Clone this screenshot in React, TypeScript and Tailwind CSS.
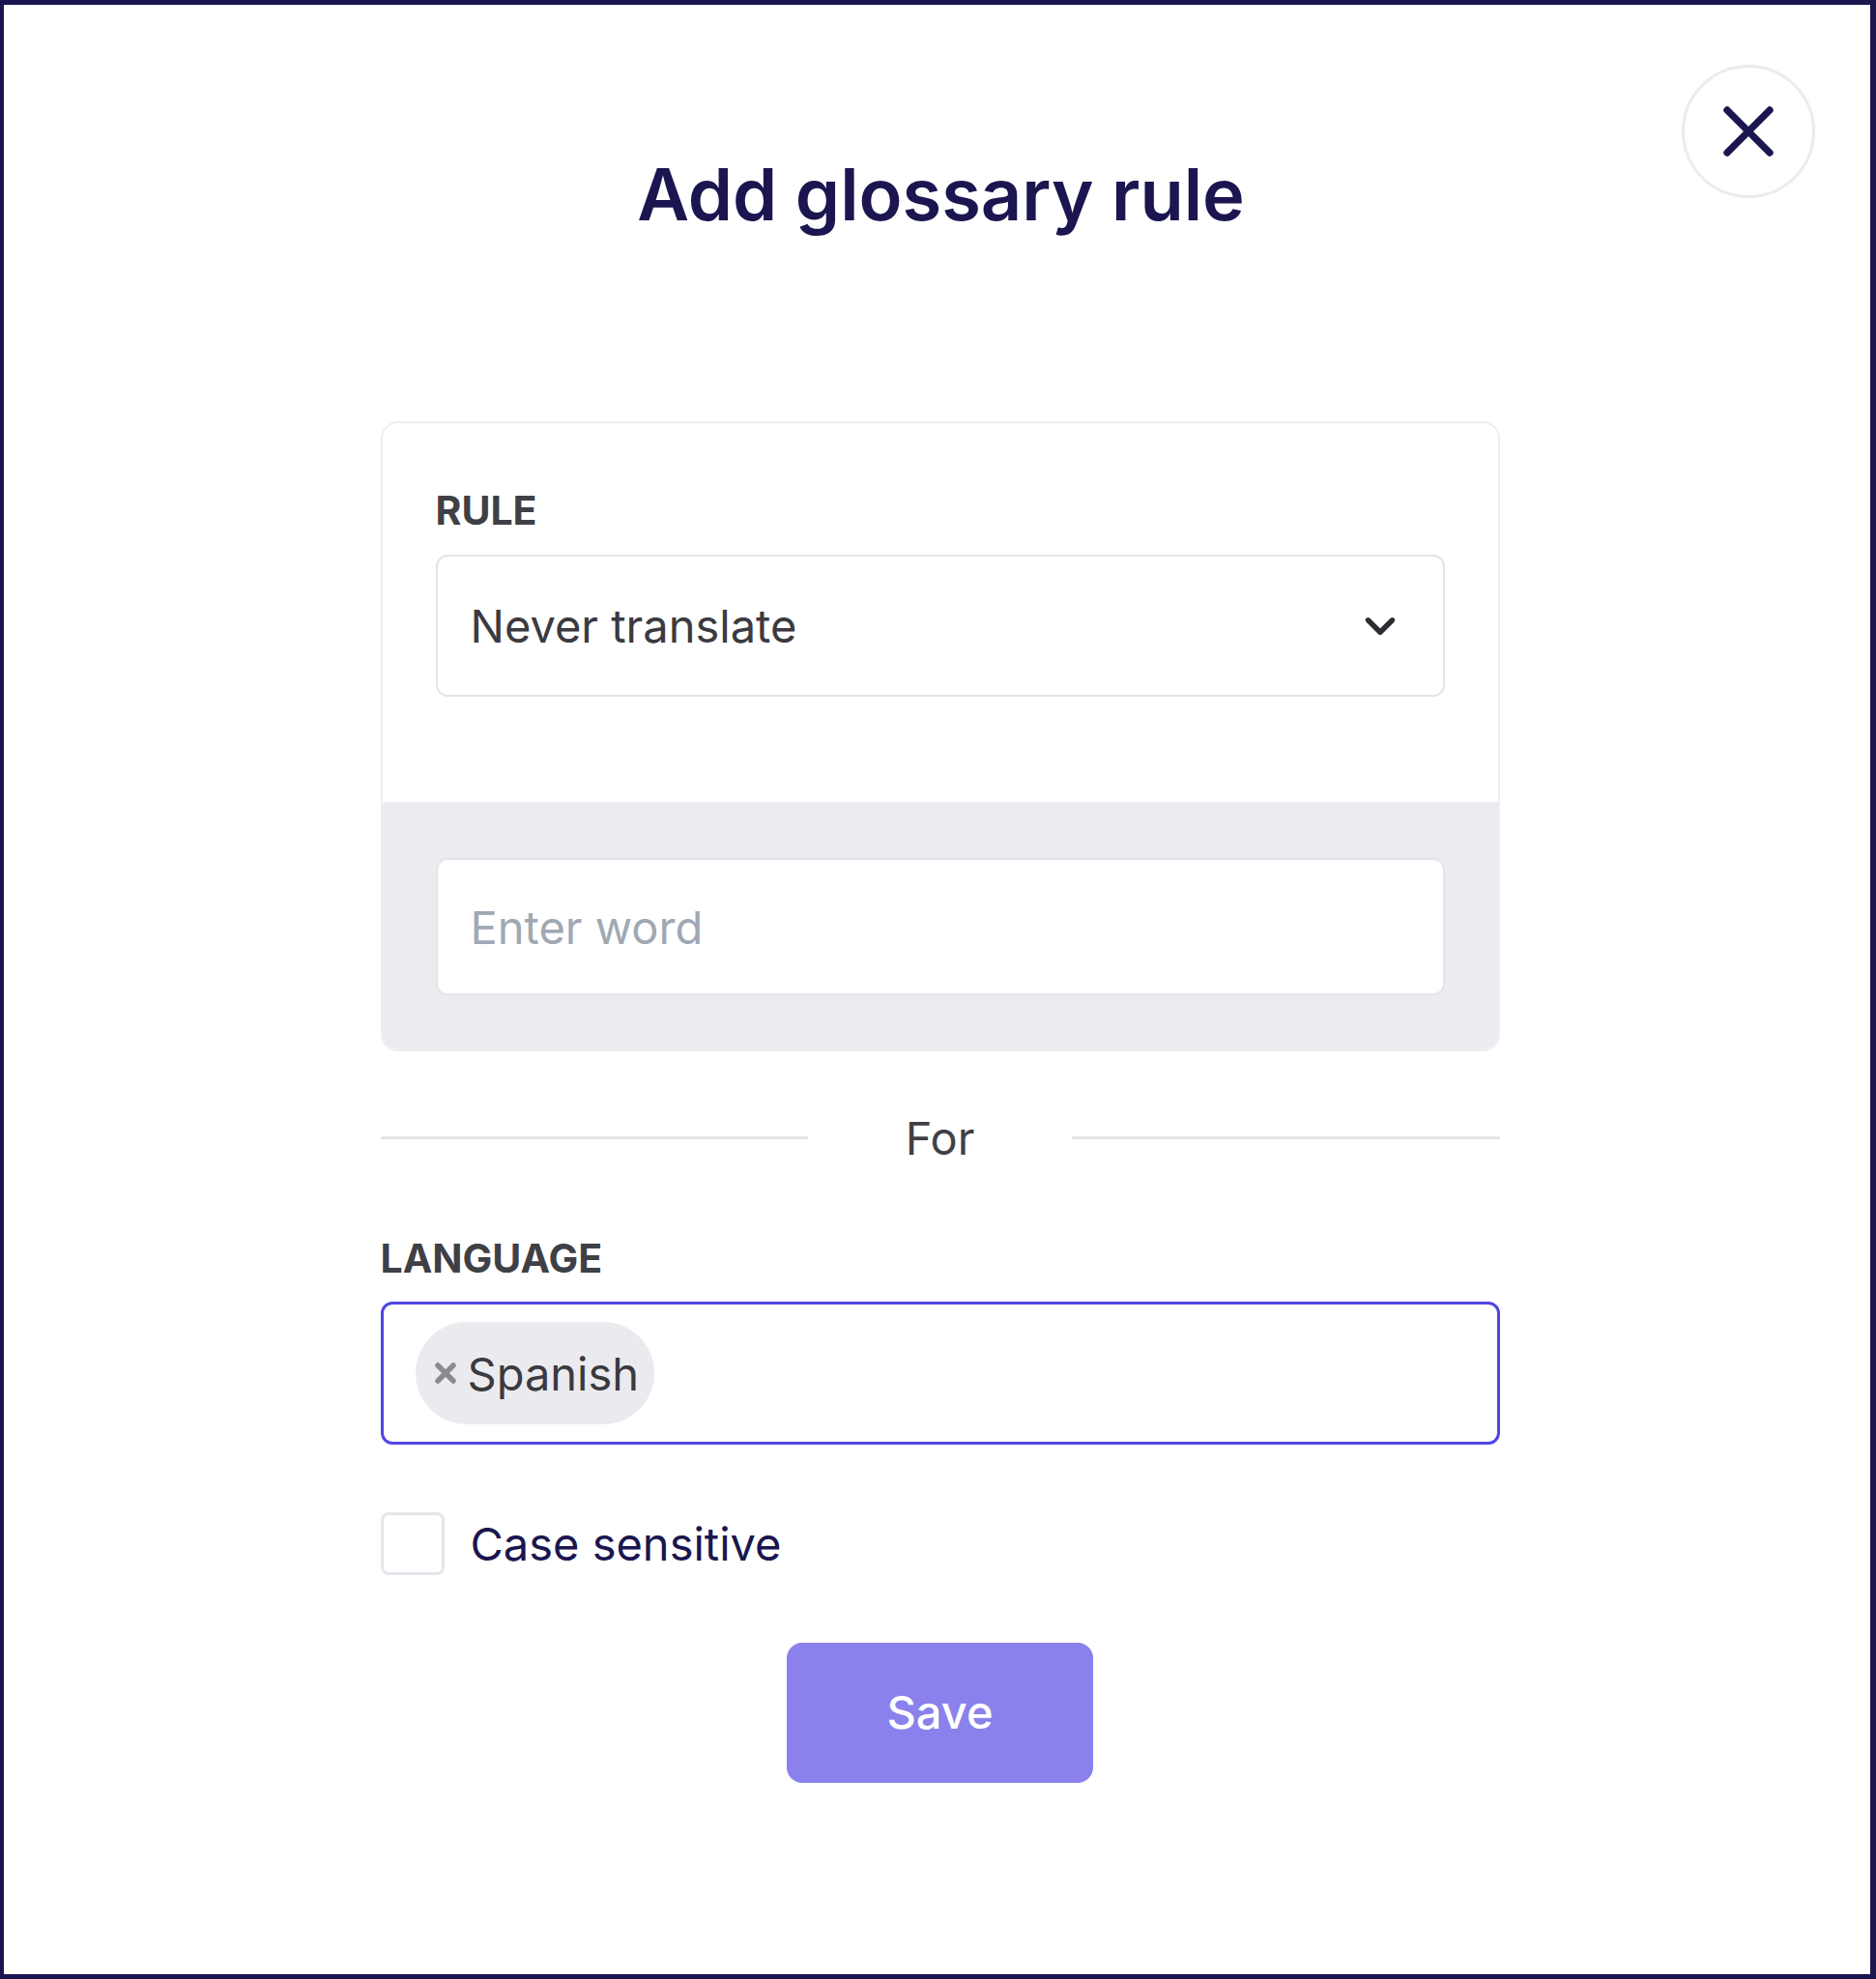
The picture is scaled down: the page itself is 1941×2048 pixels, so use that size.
import { ChevronDown, X } from "lucide-react";

const FONT = "font-['Inter','Noto_Sans',sans-serif]";

export default function App() {
  return (
    <div
      className={`${FONT} relative min-h-[2048px] w-full border-t-[5px] border-b-[5px] border-l-4 border-r-[6px] border-[#1b1650] bg-white`}
    >
      {/* Close */}
      <button className="absolute right-[57px] top-[62px] flex h-[138px] w-[138px] items-center justify-center rounded-full border-[3px] border-[#ebebf0] text-[#1b1650]">
        <X size={88} strokeWidth={2} />
      </button>

      <div className="flex flex-col items-center pt-[158px]">
        <h1 className="ml-[8px] text-[74px] font-semibold leading-[76px] text-[#1b1650]">
          Add glossary rule
        </h1>

        <div className="ml-[6px] mt-[197px] flex w-[1158px] flex-col">
          {/* Rule card */}
          <div className="overflow-hidden rounded-[18px] border-2 border-[#eceef1]">
            <div className="bg-white px-[55px] pb-[109px] pt-[70px]">
              <div className="text-[41px] font-bold leading-[41px] text-[#3f4046]">RULE</div>
              <div className="mt-[25px] flex h-[147px] items-center justify-between rounded-[12px] border-2 border-[#e2e5e9] pl-[34px] pr-[40px]">
                <span className="text-[47px] leading-none text-[#3a3a40]">Never translate</span>
                <ChevronDown size={50} strokeWidth={2.6} className="text-[#2d2d33]" />
              </div>
            </div>
            <div className="bg-[#ebecf0] px-[55px] pb-[56px] pt-[58px]">
              <div className="flex h-[142px] items-center rounded-[12px] border-2 border-[#e2e5e9] bg-white pl-[34px]">
                <span className="text-[47px] leading-none text-[#a0a8b3]">Enter word</span>
              </div>
            </div>
          </div>

          {/* For divider */}
          <div className="mt-[61px] flex h-[56px] items-center">
            <div className="h-[3px] flex-1 bg-[#e6e6e8]" />
            <span className="px-[101px] text-[47px] leading-none text-[#3f4046]">For</span>
            <div className="h-[3px] flex-1 bg-[#e6e6e8]" />
          </div>

          {/* Language */}
          <div className="mt-[77px] text-[41px] font-bold leading-[41px] text-[#3f4046]">LANGUAGE</div>
          <div className="mt-[24px] flex h-[148px] items-center rounded-[12px] border-[3px] border-[#4f46e5] pl-[33px]">
            <div className="flex h-[106px] items-center gap-[12px] rounded-full bg-[#ebebef] pl-[20px] pr-[16px]">
              <svg width="22" height="22" viewBox="0 0 22 22" className="text-[#8a8a90]">
                <path d="M3 3 19 19M19 3 3 19" stroke="currentColor" strokeWidth="5.5" strokeLinecap="round" />
              </svg>
              <span className="text-[47px] leading-none text-[#3a3a40]">Spanish</span>
            </div>
          </div>

          {/* Case sensitive */}
          <label className="mt-[70px] flex items-center gap-[27px]">
            <span className="h-[65px] w-[66px] rounded-[8px] border-[3px] border-[#e3e7ec] bg-white" />
            <span className="text-[47px] leading-none text-[#1b1650]">Case sensitive</span>
          </label>

          {/* Save */}
          <div className="mt-[70px] flex justify-center">
            <button className="h-[145px] w-[317px] rounded-[16px] bg-[#8a81ec] text-[47px] font-medium text-white">
              Save
            </button>
          </div>
        </div>
      </div>
    </div>
  );
}
